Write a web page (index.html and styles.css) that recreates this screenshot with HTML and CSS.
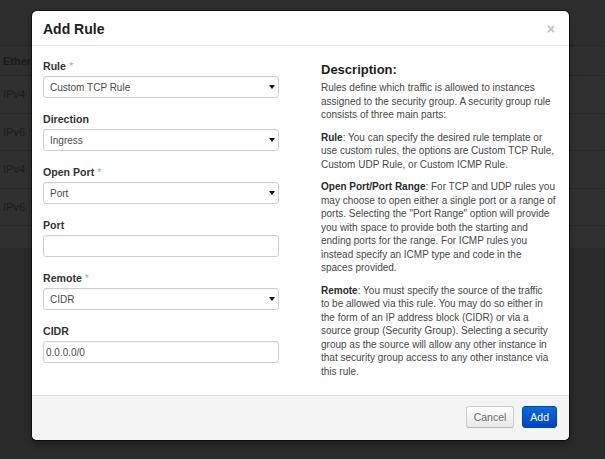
FILE: index.html
```html
<!DOCTYPE html>
<html>
<head>
<meta charset="utf-8">
<link rel="stylesheet" href="styles.css">
</head>
<body>
<div class="page">
  <div class="topbar"></div>
  <div class="table">
    <div class="row head"><span>Ether Type</span></div>
    <div class="row"><span>IPv4</span></div>
    <div class="row"><span>IPv6</span></div>
    <div class="row"><span>IPv4</span></div>
    <div class="row"><span>IPv6</span></div>
    <div class="row short"></div>
  </div>
</div>

<div class="modal">
  <div class="modal-header">
    <h3 class="title">Add Rule</h3>
    <span class="close">×</span>
  </div>
  <div class="modal-body">
    <div class="form-col">
      <div class="group">
        <label class="lbl">Rule <span class="req">*</span></label>
        <div class="select"><span>Custom TCP Rule</span></div>
      </div>
      <div class="group">
        <label class="lbl">Direction</label>
        <div class="select"><span>Ingress</span></div>
      </div>
      <div class="group">
        <label class="lbl">Open Port <span class="req">*</span></label>
        <div class="select"><span>Port</span></div>
      </div>
      <div class="group">
        <label class="lbl">Port</label>
        <div class="input"></div>
      </div>
      <div class="group">
        <label class="lbl">Remote <span class="req">*</span></label>
        <div class="select"><span>CIDR</span></div>
      </div>
      <div class="group">
        <label class="lbl">CIDR</label>
        <div class="input"><span>0.0.0.0/0</span></div>
      </div>
    </div>
    <div class="desc-col">
      <h3 class="desc-title">Description:</h3>
      <p>Rules define which traffic is allowed to instances<br>assigned to the security group. A security group rule<br>consists of three main parts:</p>
      <p><strong>Rule</strong>: You can specify the desired rule template or<br>use custom rules, the options are Custom TCP Rule,<br>Custom UDP Rule, or Custom ICMP Rule.</p>
      <p><strong>Open Port/Port Range</strong>: For TCP and UDP rules you<br>may choose to open either a single port or a range of<br>ports. Selecting the "Port Range" option will provide<br>you with space to provide both the starting and<br>ending ports for the range. For ICMP rules you<br>instead specify an ICMP type and code in the<br>spaces provided.</p>
      <p><strong>Remote</strong>: You must specify the source of the traffic<br>to be allowed via this rule. You may do so either in<br>the form of an IP address block (CIDR) or via a<br>source group (Security Group). Selecting a security<br>group as the source will allow any other instance in<br>that security group access to any other instance via<br>this rule.</p>
    </div>
  </div>
  <div class="modal-footer">
    <span class="btn btn-default">Cancel</span>
    <span class="btn btn-primary">Add</span>
  </div>
</div>
</body>
</html>
```

FILE: styles.css
```css
html, body {
  margin: 0;
  padding: 0;
}
body {
  width: 605px;
  height: 459px;
  overflow: hidden;
  background: #2a2a2a;
  font-family: "Liberation Sans", Arial, sans-serif;
  position: relative;
}
.page {
  display: flex;
  flex-direction: column;
}
.topbar {
  height: 45px;
  background: #2e2e2e;
}
.table {
  background: #303030;
}
.row {
  border-top: 1px solid #282828;
  height: 36.5px;
  display: flex;
  align-items: center;
  padding-left: 3px;
  font-size: 11px;
  color: #1b1b1b;
}
.row.head {
  height: 29px;
  font-weight: bold;
  background: #2f2f2f;
}
.row.short {
  height: 22px;
  border-bottom: 1px solid #282828;
}

.modal {
  position: absolute;
  left: 32px;
  top: 11px;
  width: 537px;
  background: #fff;
  border-radius: 5px;
  box-shadow: 0 0 0 1px rgba(0,0,0,0.5), 0 3px 7px rgba(0,0,0,0.4);
  overflow: hidden;
}
.modal-header {
  height: 34px;
  border-bottom: 1px solid #e8e8e8;
  padding: 0 11px;
  display: flex;
  align-items: center;
  justify-content: space-between;
}
.title {
  margin: 0;
  font-size: 14px;
  line-height: 17px;
  font-weight: bold;
  color: #1e1e1e;
  padding-top: 2px;
}
.close {
  font-size: 14px;
  font-weight: bold;
  color: #c4c4c4;
  margin-right: 3px;
  padding-top: 1px;
}
.modal-body {
  display: grid;
  grid-template-columns: 236px 237px;
  column-gap: 42px;
  padding: 13px 11px 17px;
  align-items: start;
}
.group {
  margin-bottom: 14px;
}
.lbl {
  display: block;
  font-size: 10.6px;
  line-height: 14px;
  font-weight: bold;
  color: #333;
  margin-bottom: 3px;
}
.req {
  color: #7cb6e0;
  font-weight: normal;
}
.select, .input {
  height: 20px;
  border: 1px solid #cfcfcf;
  border-radius: 3px;
  background: #fff;
  display: flex;
  align-items: center;
  font-size: 10px;
  color: #4a4a4a;
  box-shadow: inset 0 1px 1px rgba(0,0,0,0.04);
  position: relative;
}
.select {
  padding-left: 6px;
}
.select::after {
  content: "";
  position: absolute;
  right: 3px;
  top: 8px;
  border-left: 3px solid transparent;
  border-right: 3px solid transparent;
  border-top: 4px solid #111;
}
.input {
  padding-left: 2px;
}
.desc-col {
  font-size: 10px;
  line-height: 13.5px;
  color: #474747;
}
.desc-title {
  margin: 3px 0 3px;
  font-size: 13px;
  line-height: 16px;
  font-weight: bold;
  color: #1e1e1e;
}
.desc-col p {
  margin: 0 0 9px;
  white-space: nowrap;
}
.desc-col p:last-child {
  margin-bottom: 0;
}
.desc-col strong {
  color: #2a2a2a;
}
.modal-footer {
  border-top: 1px solid #e0e0e0;
  background: #f4f4f4;
  padding: 10px 12px 12px;
  display: flex;
  justify-content: flex-end;
  gap: 8px;
}
.btn {
  height: 20px;
  display: flex;
  align-items: center;
  padding: 0 7px;
  border-radius: 3px;
  font-size: 10.5px;
}
.btn-default {
  border: 1px solid #cccccc;
  border-bottom-color: #b8b8b8;
  background: linear-gradient(#ffffff, #e8e8e8);
  color: #6a6a6a;
}
.btn-primary {
  border: 1px solid #0645b0;
  background: linear-gradient(#0a6ad8, #0044c6);
  color: #fff;
}
```
